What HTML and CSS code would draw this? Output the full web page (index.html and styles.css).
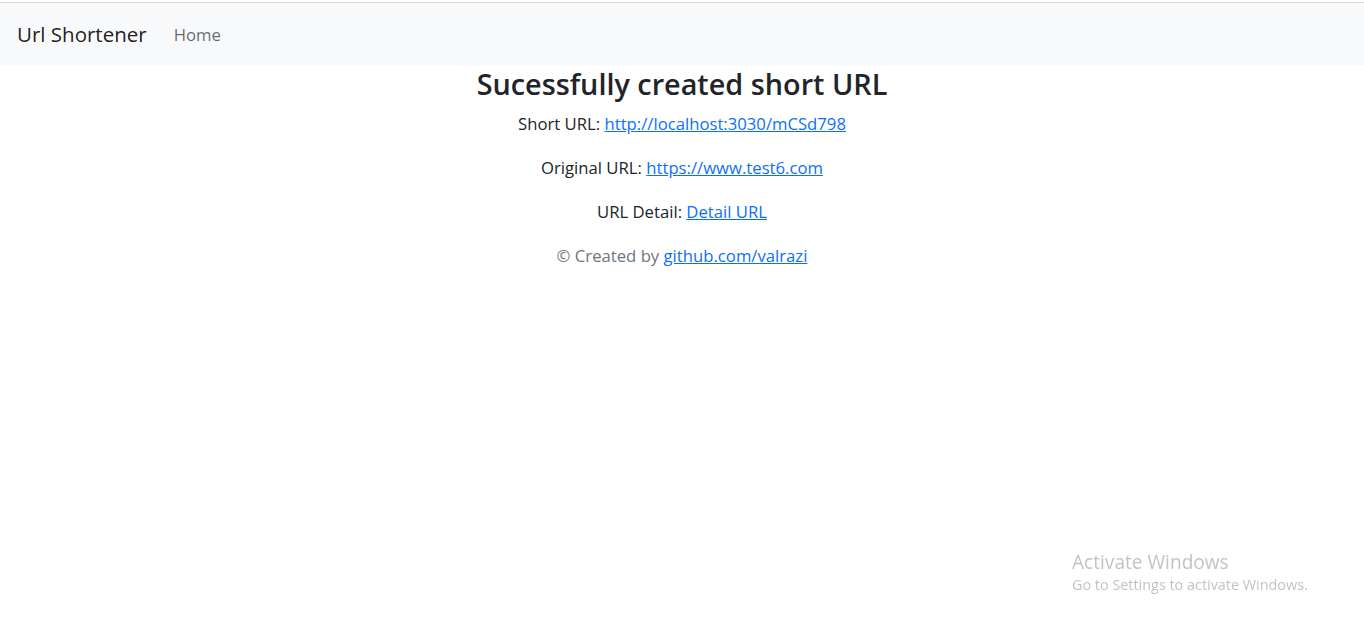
FILE: index.html
```html
<!DOCTYPE html>
<html lang="en">
<head>
<meta charset="utf-8">
<title>Url Shortener</title>
<link rel="stylesheet" href="styles.css">
</head>
<body>
<div class="topline"></div>
<nav class="navbar">
  <a class="brand" href="#">Url Shortener</a>
  <a class="nav-link" href="#">Home</a>
</nav>
<main class="content">
  <h2 class="title">Sucessfully created short URL</h2>
  <p>Short URL: <a href="#">http://localhost:3030/mCSd798</a></p>
  <p>Original URL: <a href="#">https://www.test6.com</a></p>
  <p>URL Detail: <a href="#">Detail URL</a></p>
  <p class="muted">© Created by <a href="#">github.com/valrazi</a></p>
</main>
<div class="watermark">
  <div class="wm-title">Activate Windows</div>
  <div class="wm-sub">Go to Settings to activate Windows.</div>
</div>
</body>
</html>
```
FILE: styles.css
```css
html, body {
  margin: 0;
  padding: 0;
  background: #fff;
}
body {
  font-family: "Open Sans", "Noto Sans", sans-serif;
  font-size: 16.7px;
  line-height: 1.5;
  color: #212529;
}
.topline {
  height: 2px;
  border-bottom: 1px solid #d9dadc;
}
.navbar {
  background: #f8f9fa;
  height: 62px;
  display: flex;
  align-items: center;
  padding: 0 17px;
  box-sizing: border-box;
}
.brand {
  font-size: 20.5px;
  color: rgba(0,0,0,.9);
  text-decoration: none;
  margin-right: 27px;
}
.nav-link {
  color: rgba(0,0,0,.6);
  text-decoration: none;
  font-size: 16.7px;
  padding-top: 1px;
}
.content {
  text-align: center;
}
.title {
  margin: 0 0 9px;
  font-size: 28.8px;
  font-weight: 600;
  line-height: 38px;
}
.content p {
  margin: 0 0 20px;
  line-height: 24px;
}
.content a {
  color: #0d6efd;
}
.muted {
  color: #6c757d;
}
.watermark {
  position: fixed;
  left: 1072px;
  top: 549px;
  color: rgba(120,120,120,.45);
  font-family: "Open Sans", "Noto Sans", sans-serif;
}
.wm-title {
  font-size: 19.1px;
  line-height: 26px;
}
.wm-sub {
  font-size: 14.4px;
  line-height: 20px;
}
```
